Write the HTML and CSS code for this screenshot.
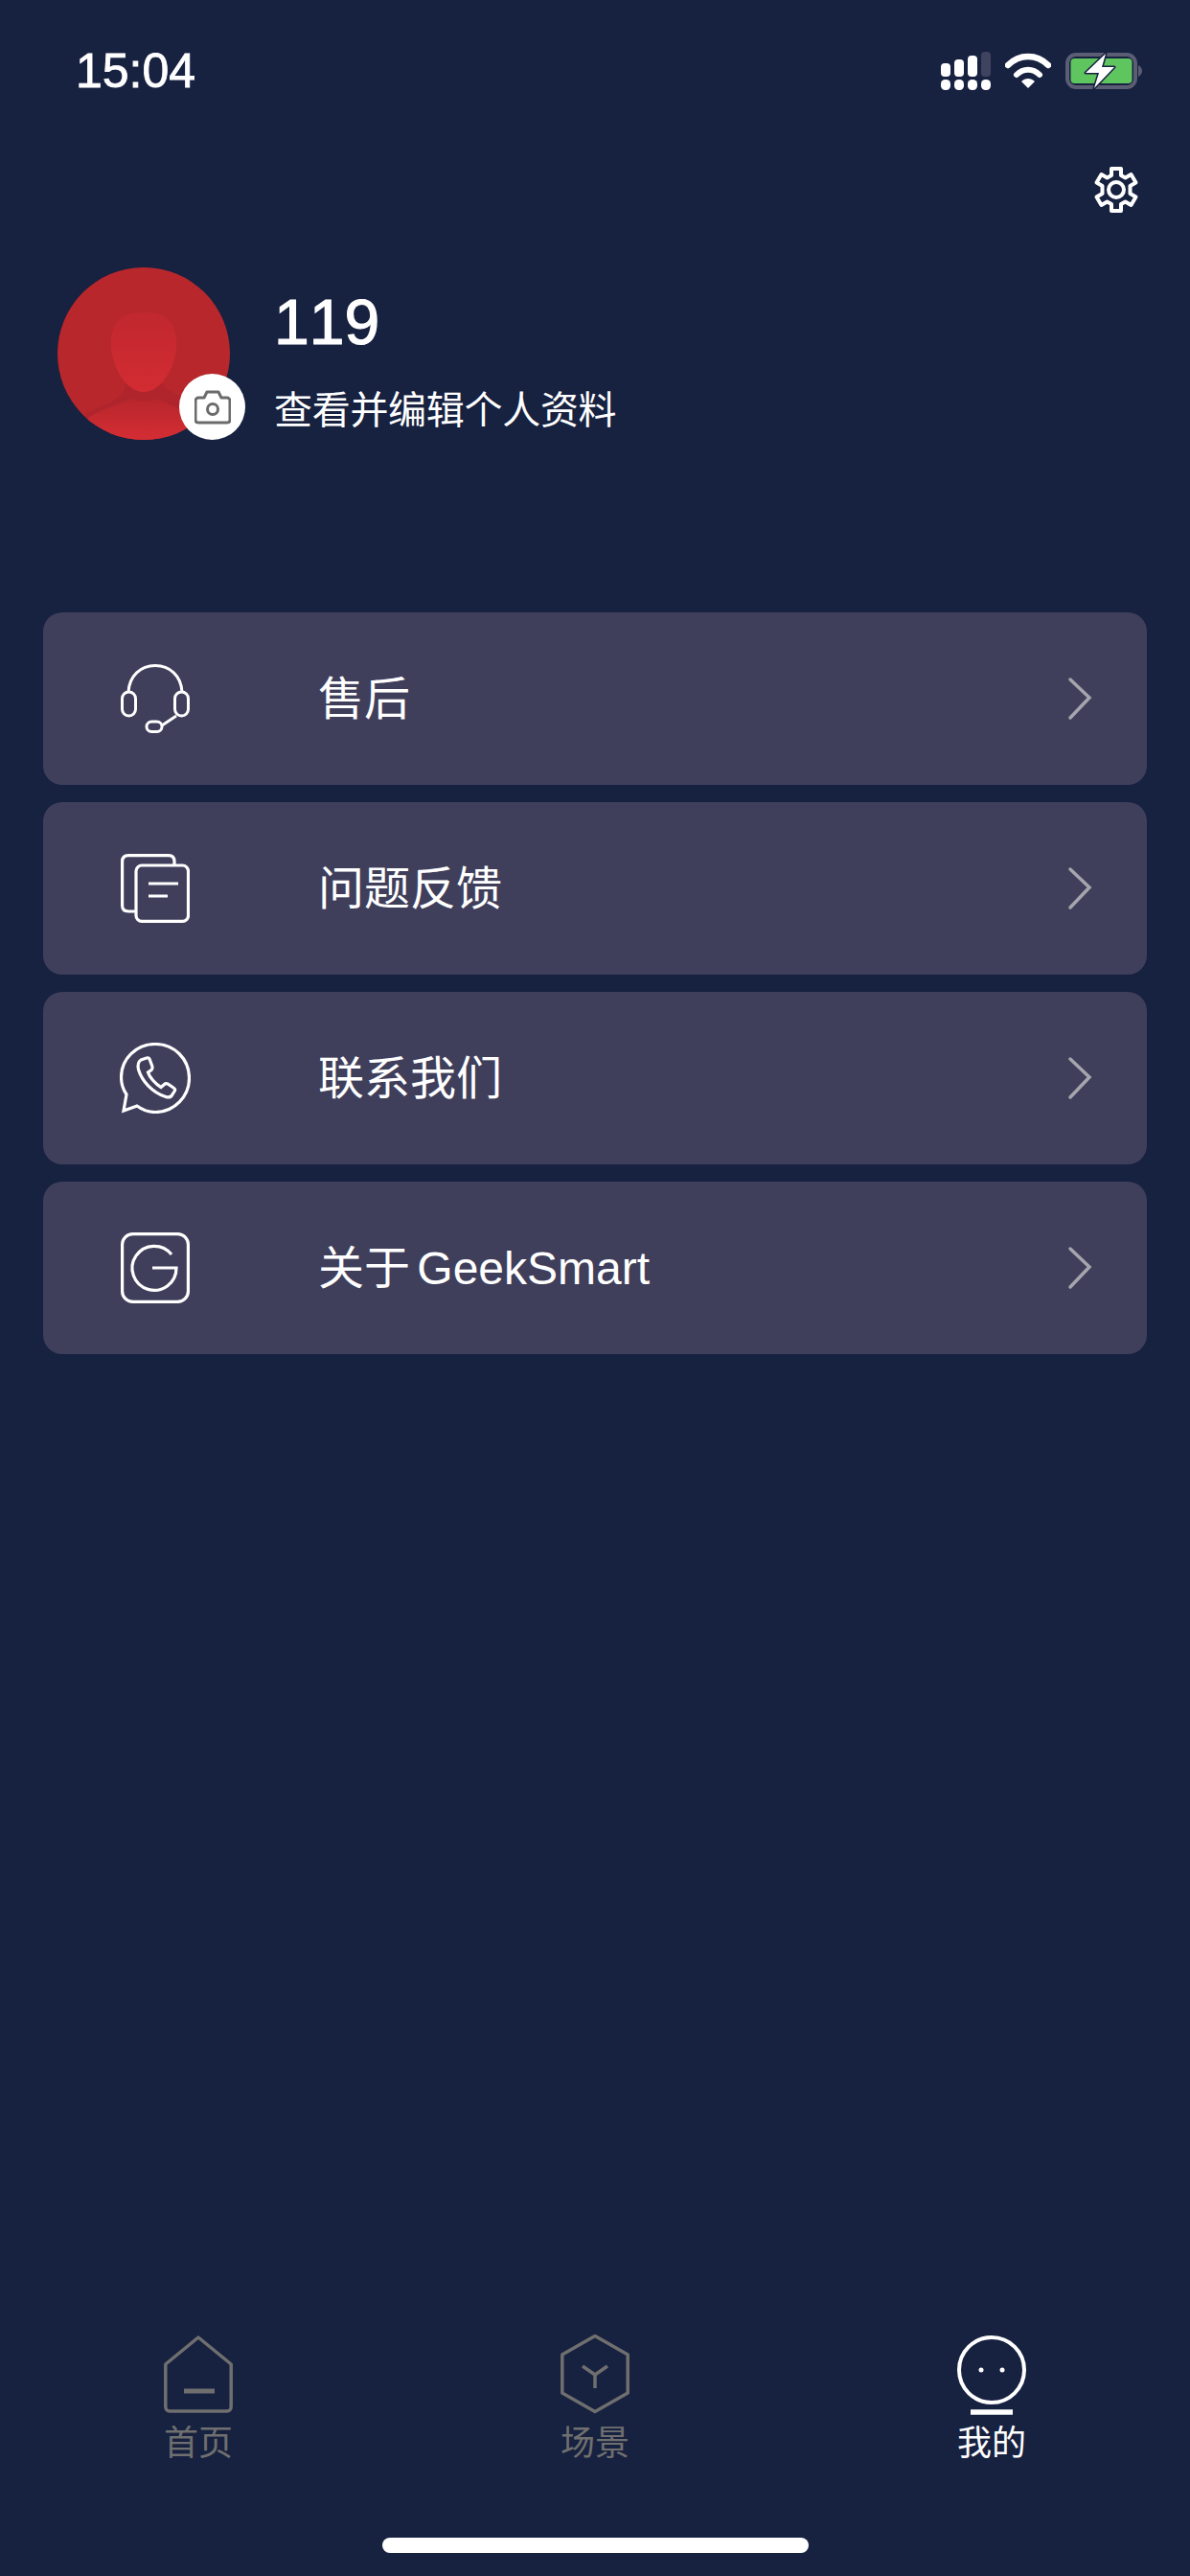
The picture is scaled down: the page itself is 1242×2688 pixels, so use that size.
FILE: index.html
```html
<!DOCTYPE html>
<html lang="zh-CN">

<head>
    <meta charset="UTF-8">
    <meta name="viewport" content="width=device-width, initial-scale=1.0">
    <title>我的</title>
    <link rel="stylesheet" href="styles.css">
</head>

<body>
    <div class="page">
        <div class="statusbar">
            <span class="statusbar__time">15:04</span>
            <div class="statusbar__icons">
                <svg class="icon-signal" width="52" height="40" viewBox="0 0 52 40">
                    <rect x="0" y="12" width="10" height="14" rx="4" fill="#fff"/>
                    <rect x="14" y="8" width="10" height="18" rx="4" fill="#fff"/>
                    <rect x="28" y="4" width="10" height="22" rx="4" fill="#fff"/>
                    <rect x="42" y="0" width="10" height="26" rx="4" fill="#40435f"/>
                    <rect x="0" y="29" width="10" height="11" rx="4.500" fill="#fff"/>
                    <rect x="14" y="29" width="10" height="11" rx="4.500" fill="#fff"/>
                    <rect x="28" y="29" width="10" height="11" rx="4.500" fill="#fff"/>
                    <rect x="42" y="29" width="10" height="11" rx="4.500" fill="#fff"/>
                </svg>
                <svg class="icon-wifi" width="48" height="38" viewBox="0 0 48 38">
                    <path d="M3 13C15 1 33 1 45 13" fill="none" stroke="#fff" stroke-width="6.500" stroke-linecap="round"/>
                    <path d="M12 23C19 16 29 16 36 23" fill="none" stroke="#fff" stroke-width="6" stroke-linecap="round"/>
                    <path d="M17 30C21 26 27 26 31 30L24 37Z" fill="#fff"/>
                </svg>
                <svg class="icon-battery" width="80" height="38" viewBox="0 0 80 38">
                    <rect x="2" y="2" width="71" height="34" rx="9" fill="none" stroke="#5b5d74" stroke-width="4"/>
                    <rect x="5.500" y="6" width="64" height="26" rx="4" fill="#5fc55f"/>
                    <path d="M76 13C78 14 80 16 80 19C80 22 78 24 76 25Z" fill="#5b5d74"/>
                    <path d="M42 1L21 21H35L30 37L51 15H38Z" fill="#fff" stroke="#172140" stroke-width="3" stroke-linejoin="round" paint-order="stroke"/>
                </svg>
            </div>
        </div>

        <div class="settings">
            <svg width="48" height="50" viewBox="0 0 48 50" fill="none" stroke="#fff" stroke-width="4" stroke-linejoin="round">
                <path d="M19 3H29V10L33.500 12.500L39.500 9L44.500 17.500L38.500 21V29L44.500 32.500L39.500 41L33.500 37.500L29 40V47H19V40L14.500 37.500L8.500 41L3.500 32.500L9.500 29V21L3.500 17.500L8.500 9L14.500 12.500L19 10Z"/>
                <circle cx="24" cy="25" r="8"/>
            </svg>
        </div>

        <div class="profile">
            <div class="avatar">
                <svg width="180" height="180" viewBox="0 0 180 180">
                    <defs>
                        <linearGradient id="avatarBody" x1="0" y1="0" x2="0" y2="1">
                            <stop offset="0" stop-color="#b8262c"/>
                            <stop offset="1" stop-color="#d42d34"/>
                        </linearGradient>
                        <linearGradient id="avatarHead" x1="0" y1="0" x2="0" y2="1">
                            <stop offset="0" stop-color="#c1282e"/>
                            <stop offset="1" stop-color="#d32c33"/>
                        </linearGradient>
                        <clipPath id="avatarClip">
                            <circle cx="90" cy="90" r="90"/>
                        </clipPath>
                    </defs>
                    <g clip-path="url(#avatarClip)">
                        <rect width="180" height="180" fill="#b8272c"/>
                        <path d="M72 112C72 130 66 136 50 143L30 152L30 180H160L170 146C130 136 108 130 105 112Z" fill="#b0252b"/>
                        <path d="M32 157C45 148 60 145 77 137C86 141 96 141 105 137C118 146 135 150 150 155L150 180H32Z" fill="url(#avatarBody)"/>
                        <path d="M90 47C74 47 56 51 56 80C56 104 72 130 90 130C108 130 124 104 124 80C124 51 106 47 90 47Z" fill="url(#avatarHead)"/>
                    </g>
                </svg>
                <div class="avatar__badge">
                    <svg width="38" height="36" viewBox="0 0 38 36" fill="none" stroke="#6b6b6b" stroke-width="3" stroke-linejoin="round">
                        <path d="M4 8H10L13 2H25L28 8H34C35.500 8 37 9.500 37 11V31C37 33 35.500 34 34 34H4C2.500 34 1 33 1 31V11C1 9.500 2.500 8 4 8Z"/>
                        <circle cx="19" cy="20" r="5.500"/>
                    </svg>
                </div>
            </div>
            <div class="profile__info">
                <div class="profile__name">119</div>
                <div class="profile__hint">查看并编辑个人资料</div>
            </div>
        </div>

        <div class="menu">
            <div class="menu__row">
                <div class="menu__slot">
                    <svg width="72" height="72" viewBox="0 0 72 72" fill="none" stroke="#fff" stroke-width="3">
                        <path d="M8 29C9 12 21 1.500 36 1.500C51 1.500 63 12 64 29"/>
                        <rect x="1.500" y="29" width="14" height="25" rx="7"/>
                        <rect x="56.500" y="29" width="14" height="25" rx="7"/>
                        <path d="M58 54L43 64"/>
                        <rect x="27" y="60" width="16" height="10.500" rx="5.250"/>
                    </svg>
                </div>
                <span class="menu__label">售后</span>
                <svg class="menu__arrow" width="26" height="46" viewBox="0 0 26 46" fill="none" stroke="#a5a5ad" stroke-width="3.500" stroke-linecap="round">
                    <path d="M3 3L23 22L3 43"/>
                </svg>
            </div>
            <div class="menu__row">
                <div class="menu__slot">
                    <svg width="72" height="72" viewBox="0 0 72 72" fill="none" stroke="#fff" stroke-width="3.200">
                        <path d="M16 60H8C3.500 60 1.600 57.500 1.600 54V8C1.600 4 4 1.600 8 1.600H50C54 1.600 56 4 56 8V12"/>
                        <rect x="16" y="12" width="54.500" height="58.400" rx="6"/>
                        <path d="M29 31H60M29 44H49"/>
                    </svg>
                </div>
                <span class="menu__label">问题反馈</span>
                <svg class="menu__arrow" width="26" height="46" viewBox="0 0 26 46" fill="none" stroke="#a5a5ad" stroke-width="3.500" stroke-linecap="round">
                    <path d="M3 3L23 22L3 43"/>
                </svg>
            </div>
            <div class="menu__row">
                <div class="menu__slot">
                    <svg width="74" height="74" viewBox="0 0 74 74" fill="none" stroke="#fff" stroke-width="3.200">
                        <path d="M37 1.500C17 1.500 1.500 17 1.500 36C1.500 43 3.500 49 7 54L4 71L18 66C23.500 70 30 72.500 37 72.500C57 72.500 72.500 56 72.500 37C72.500 17 57 1.500 37 1.500Z"/>
                        <path d="M22 18L28 16C29.500 15.500 30.500 16 31 17L34 25C34.500 26.500 34 27.500 33 28.500L29.500 31C31 36 37 43 43 46.500L46.500 43.500C47.500 42.500 48.500 42.500 50 43L56 47C57.500 48 58 49 57.500 50L55 54C53.500 57 51 57.500 48 56.500C34 52 23 40 19.500 28C18.500 23 19 20 22 18Z"/>
                    </svg>
                </div>
                <span class="menu__label">联系我们</span>
                <svg class="menu__arrow" width="26" height="46" viewBox="0 0 26 46" fill="none" stroke="#a5a5ad" stroke-width="3.500" stroke-linecap="round">
                    <path d="M3 3L23 22L3 43"/>
                </svg>
            </div>
            <div class="menu__row">
                <div class="menu__slot">
                    <svg width="72" height="74" viewBox="0 0 72 74" fill="none" stroke="#fff" stroke-width="3.200">
                        <rect x="1.600" y="1.600" width="68.800" height="70.800" rx="11"/>
                        <path d="M53 23A23 23 0 1 0 58 37H33"/>
                    </svg>
                </div>
                <span class="menu__label menu__label--about">关于 GeekSmart</span>
                <svg class="menu__arrow" width="26" height="46" viewBox="0 0 26 46" fill="none" stroke="#a5a5ad" stroke-width="3.500" stroke-linecap="round">
                    <path d="M3 3L23 22L3 43"/>
                </svg>
            </div>
        </div>

        <div class="tabbar">
            <div class="tabbar__item">
                <svg width="72" height="84" viewBox="0 0 72 84" fill="none" stroke="#6f6f6f" stroke-width="3.500">
                    <path d="M36 3L1.800 31V75C1.800 78 3.500 80 6 80H66C68.500 80 70.200 78 70.200 75V31Z" stroke-linejoin="round"/>
                    <path d="M21 59H53" stroke-width="5"/>
                </svg>
                <span>首页</span>
            </div>
            <div class="tabbar__item">
                <svg width="72" height="84" viewBox="0 0 72 84" fill="none" stroke="#6f6f6f" stroke-width="3.500" stroke-linejoin="round">
                    <path d="M36 1.500L70.200 21V61L36 80.500L1.800 61V21Z"/>
                    <path d="M23 33L36 42L49 33M36 42V56"/>
                </svg>
                <span>场景</span>
            </div>
            <div class="tabbar__item tabbar__item--active">
                <svg width="72" height="84" viewBox="0 0 72 84" fill="none" stroke="#fff" stroke-width="4">
                    <circle cx="36" cy="37" r="34"/>
                    <path d="M14 81H58" stroke-width="5.500"/>
                    <circle cx="25" cy="37" r="2.500" fill="#fff" stroke="none"/>
                    <circle cx="47" cy="37" r="2.500" fill="#fff" stroke="none"/>
                </svg>
                <span>我的</span>
            </div>
        </div>

        <div class="homebar">
            <div class="homebar__line"></div>
        </div>
    </div>
</body>

</html>
```

FILE: styles.css
```css
* {
    box-sizing: border-box;
}

body {
    margin: 0;
    font-family: "Liberation Sans", "Noto Sans CJK SC", sans-serif;
    background-color: #172140;
    color: #fff;
}

svg {
    display: block;
}

.page {
    height: 2688px;
    display: flex;
    flex-direction: column;
    overflow: hidden;
}

.statusbar {
    height: 92px;
    padding: 54px 50px 0 79px;
    display: flex;
    justify-content: space-between;
    align-items: flex-start;
}

.statusbar__time {
    font-size: 50px;
    line-height: 40px;
    font-kerning: none;
    -webkit-text-stroke: 0.8px #fff;
}

.statusbar__icons {
    display: flex;
    align-items: center;
    gap: 15px;
    height: 40px;
}

.settings {
    display: flex;
    justify-content: flex-end;
    padding: 81px 53px 0 0;
}

.profile {
    display: flex;
    align-items: flex-start;
    margin-top: 56px;
    padding-left: 60px;
}

.avatar {
    position: relative;
    width: 180px;
    height: 180px;
}

.avatar__badge {
    position: absolute;
    left: 127px;
    top: 111px;
    width: 69px;
    height: 69px;
    border-radius: 50%;
    background-color: #fff;
    display: flex;
    align-items: center;
    justify-content: center;
}

.profile__info {
    margin-left: 46px;
}

.profile__name {
    font-size: 66px;
    line-height: 66px;
    margin-top: 24px;
    font-kerning: none;
    -webkit-text-stroke: 1.2px #fff;
}

.profile__hint {
    font-size: 40px;
    line-height: 50px;
    margin-top: 34px;
    letter-spacing: -0.3px;
}

.menu {
    margin-top: 180px;
    padding: 0 45px;
    display: flex;
    flex-direction: column;
    gap: 18px;
}

.menu__row {
    height: 180px;
    padding: 0 57px 0 79px;
    background-color: #3f3f5c;
    border-radius: 20px;
    display: flex;
    align-items: center;
}

.menu__slot {
    width: 76px;
    flex-shrink: 0;
    display: flex;
    justify-content: center;
}

.menu__label {
    font-size: 48px;
    margin: 0 0 8px 132px;
    flex-grow: 1;
}

.menu__label--about {
    word-spacing: -6px;
}

.menu__arrow {
    flex-shrink: 0;
}

.tabbar {
    margin-top: auto;
    display: grid;
    grid-template-columns: repeat(3, 1fr);
}

.tabbar__item {
    display: flex;
    flex-direction: column;
    align-items: center;
    color: #6f6f6f;
    font-size: 36px;
    line-height: 44px;
    gap: 8px;
}

.tabbar__item--active {
    color: #fff;
}

.homebar {
    height: 40px;
    margin-top: 76px;
    display: flex;
    justify-content: center;
}

.homebar__line {
    width: 445px;
    height: 16px;
    border-radius: 8px;
    background-color: #fff;
}
```
